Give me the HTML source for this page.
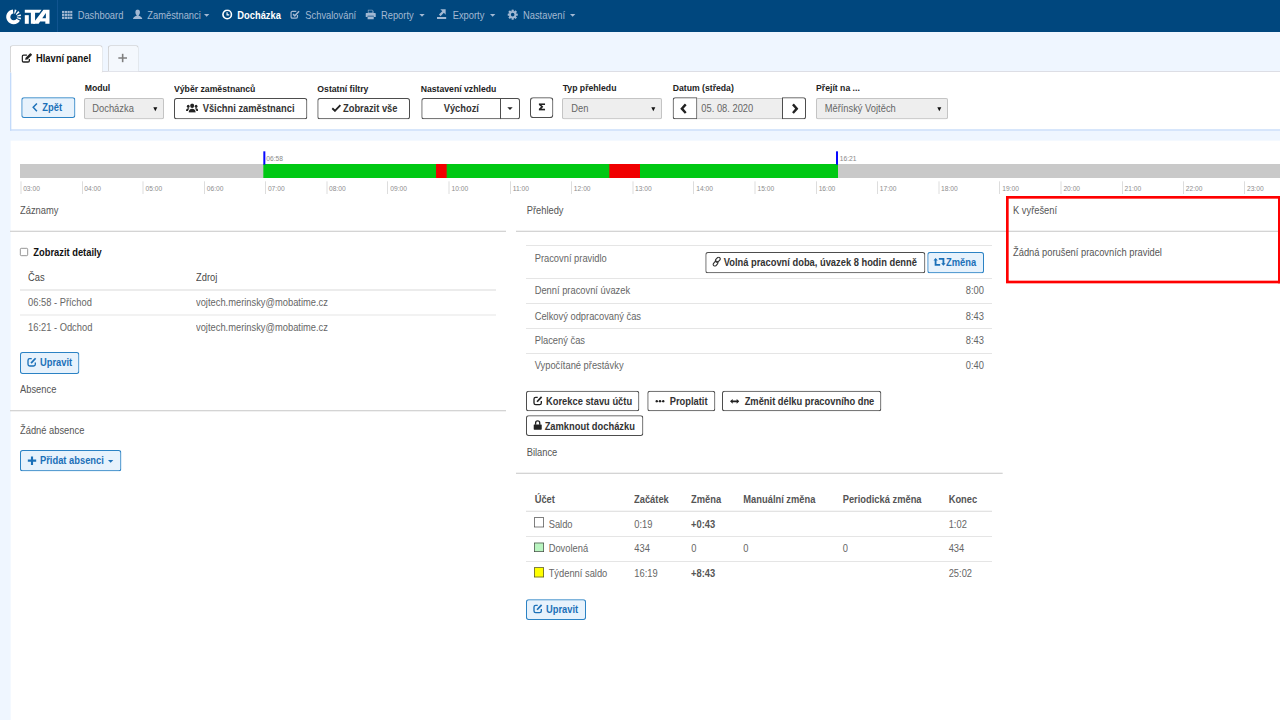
<!DOCTYPE html>
<html lang="cs">
<head>
<meta charset="utf-8">
<title>iTA - Docházka</title>
<style>
*{box-sizing:border-box;}
html,body{margin:0;padding:0;width:1280px;height:720px;overflow:hidden;background:#eff6ff;}
body{font-family:"Liberation Sans",sans-serif;font-size:14px;color:#555;}
#root{position:absolute;left:0;top:0;width:1920px;height:1080px;transform:scale(0.666667);transform-origin:0 0;overflow:hidden;background:#eff6ff;line-height:20px;}
.abs{position:absolute;}
svg{display:block;}
/* navbar */
#nav{position:absolute;left:0;top:0;width:1920px;height:48px;background:#00477e;}
#nav .it{position:absolute;top:2.75px;height:48px;line-height:43px;color:#a3b9d3;font-size:14px;white-space:nowrap;}
#nav .it.act{color:#fff;font-weight:bold;}
#nav .ic{position:absolute;}
.caret{position:absolute;width:0;height:0;border-left:4px solid transparent;border-right:4px solid transparent;border-top:4px solid #a3b9d3;}
/* tabs */
.tab{position:absolute;top:68px;height:40px;border:1px solid #c6c6c6;border-bottom:none;border-radius:4px 4px 0 0;background:#fff;}
#fpanel{position:absolute;left:15.4px;top:107px;width:1920px;height:89px;background:#fff;border:2px solid #c3dafa;border-top:1px solid #d0d0d8;}
.lbl{position:absolute;top:122px;font-weight:bold;font-size:13px;color:#222;white-space:nowrap;line-height:20px;}
.btn{position:absolute;height:30px;border:0;box-shadow:inset 0 0 0 1.5px #4d4d4d;border-radius:4px;background:#fff;color:#333;font-weight:bold;font-size:14px;line-height:28px;white-space:nowrap;}
.btn.blue{background:#e7f2fc;box-shadow:inset 0 0 0 1.5px #2b82c4;color:#1b70b8;}
.sel{position:absolute;height:32px;border:0;box-shadow:inset 0 0 0 1.5px #c4c4c4;border-radius:3px;background:#eee;color:#666;font-size:14px;line-height:28px;white-space:nowrap;}
.sel i{position:absolute;right:10px;top:13px;width:0;height:0;border-left:3.5px solid transparent;border-right:3.5px solid transparent;border-top:6px solid #111;}
/* main */
#main{position:absolute;left:15.5px;top:211.2px;width:1920px;height:880px;background:#fff;}
.tick{position:absolute;top:272px;width:1px;height:19px;background:#ccc;}
.tl{position:absolute;top:278px;font-size:10px;line-height:10px;color:#8e8e8e;}
.h{position:absolute;font-size:14px;color:#555;white-space:nowrap;line-height:20px;}
.hr{position:absolute;height:2px;background:#d4d4d4;}
.ln{position:absolute;height:1.2px;background:#d8d8d8;}
.t{position:absolute;font-size:14px;color:#666;white-space:nowrap;line-height:20px;}
.btn>*,.sel>*{margin-left:1px;margin-top:1px;}
.b{font-weight:bold;}
.r{text-align:right;}
.it,.t,.h,.lbl,.tl,.btn span.abs,.sel span.abs,.sx{transform:scaleY(1.12);transform-origin:50% 50%;}
</style>
</head>
<body>
<div id="root">
<!--NAV-S-->
<div id="nav">
 <svg class="abs" style="left:0;top:0" width="90" height="48" viewBox="0 0 90 48">
  <g fill="none" stroke="#fff">
   <path d="M19.66 17.29 A8.05 8.05 0 1 0 27.33 29.57" stroke-width="6.1"/>
   <path d="M21.69 17.34 A8.05 8.05 0 0 1 23.71 17.92" stroke-width="6.1"/><path d="M25.51 19.00 A8.05 8.05 0 0 1 26.97 20.51" stroke-width="6.1"/><path d="M27.99 22.35 A8.05 8.05 0 0 1 28.50 24.39" stroke-width="6.1"/><path d="M28.50 26.21 A8.05 8.05 0 0 1 27.99 28.25" stroke-width="6.1"/>
  </g>
  <g fill="#fff">
   <rect x="37.2" y="22.75" width="6" height="12.95"/>
   <path d="M37.2 14.8H62.2L59.1 19.2H52.6V35.7H46.3V19.2H37.2Z"/>
   <path d="M65.1 14.8H74.25V35.7H68V32.3H60.1L58 35.7H49.07Z M68.8 19.6V27.3H63.4Z" fill-rule="evenodd"/>
  </g>
 </svg>
 <div class="abs" style="left:86px;top:0;width:1px;height:48px;background:#1a5c99"></div>
 <!-- grid -->
 <svg class="ic" style="left:93px;top:16px" width="16" height="13" viewBox="0 0 16 13" fill="#a3b9d3">
  <rect x="0" y="0" width="3.4" height="3.4"/><rect x="4.1" y="0" width="3.4" height="3.4"/><rect x="8.2" y="0" width="3.4" height="3.4"/><rect x="12.3" y="0" width="3.4" height="3.4"/>
  <rect x="0" y="4.5" width="3.4" height="3.4"/><rect x="4.1" y="4.5" width="3.4" height="3.4"/><rect x="8.2" y="4.5" width="3.4" height="3.4"/><rect x="12.3" y="4.5" width="3.4" height="3.4"/>
  <rect x="0" y="9" width="3.4" height="3.4"/><rect x="4.1" y="9" width="3.4" height="3.4"/><rect x="8.2" y="9" width="3.4" height="3.4"/><rect x="12.3" y="9" width="3.4" height="3.4"/>
 </svg>
 <div class="it" style="left:116.5px">Dashboard</div>
 <!-- user -->
 <svg class="ic" style="left:199px;top:14px" width="15" height="15" viewBox="0 0 15 15" fill="#a3b9d3">
  <path d="M7.5 0.3C9.6 0.3 10.9 1.9 10.9 4.3C10.9 6.3 10 8 9 8.7V9.6C10.5 10.2 14.3 11.2 14.6 14.6H0.4C0.7 11.2 4.5 10.2 6 9.6V8.7C5 8 4.1 6.3 4.1 4.3C4.1 1.9 5.4 0.3 7.5 0.3Z"/>
 </svg>
 <div class="it" style="left:221px">Zaměstnanci</div>
 <div class="caret" style="left:306px;top:21px"></div>
 <!-- clock -->
 <svg class="ic" style="left:333px;top:14px" width="16" height="16" viewBox="0 0 16 16">
  <circle cx="7.8" cy="7.8" r="6.4" fill="none" stroke="#fff" stroke-width="2.4"/>
  <path d="M7.6 4.2V8.4H10.8" fill="none" stroke="#fff" stroke-width="1.7"/>
 </svg>
 <div class="it act" style="left:356px">Docházka</div>
 <!-- check square -->
 <svg class="ic" style="left:435px;top:14px" width="16" height="16" viewBox="0 0 16 16" fill="none" stroke="#a3b9d3">
  <path d="M11.2 8.6V11.2Q11.2 13.2 9.2 13.2H3.6Q1.6 13.2 1.6 11.2V5.2Q1.6 3.2 3.6 3.2H9.4" stroke-width="1.8"/>
  <path d="M4.6 7.2L7.2 9.8L13.6 2.8" stroke-width="2.2"/>
 </svg>
 <div class="it" style="left:458px">Schvalování</div>
 <!-- print -->
 <svg class="ic" style="left:548px;top:14px" width="16" height="16" viewBox="0 0 16 16" fill="#a3b9d3">
  <path d="M3.8 0.6H10.4L12.2 2.4V6H3.8Z"/>
  <path d="M1.4 5.4H14.6Q15.6 5.4 15.6 6.4V11.6H12.6V9.6H3.4V11.6H0.4V6.4Q0.4 5.4 1.4 5.4Z"/>
  <path d="M3.4 10.6H12.6V14.8H3.4Z"/>
  <rect x="4.6" y="1.6" width="6.2" height="3.4" fill="#00477e"/>
 </svg>
 <div class="it" style="left:571.5px">Reporty</div>
 <div class="caret" style="left:629px;top:21px"></div>
 <!-- export -->
 <svg class="ic" style="left:655px;top:13px" width="16" height="17" viewBox="0 0 16 17" fill="#a3b9d3">
  <path d="M5.5 1H13.5V9L10.8 6.3L5.8 11.3L3.4 8.9L8.4 3.9Z"/>
  <rect x="0.5" y="12.5" width="13.75" height="3"/>
 </svg>
 <div class="it" style="left:679px">Exporty</div>
 <div class="caret" style="left:735px;top:21px"></div>
 <!-- cog -->
 <svg class="ic" style="left:761px;top:14px" width="16" height="16" viewBox="-8 -8 16 16" fill="#a3b9d3">
  <rect x="-1.7" y="-7.6" width="3.4" height="15.2" rx="0.6"/><rect x="-1.7" y="-7.6" width="3.4" height="15.2" rx="0.6" transform="rotate(45)"/><rect x="-1.7" y="-7.6" width="3.4" height="15.2" rx="0.6" transform="rotate(90)"/><rect x="-1.7" y="-7.6" width="3.4" height="15.2" rx="0.6" transform="rotate(135)"/>
  <circle r="5.3"/><circle r="2.7" fill="#00477e"/>
 </svg>
 <div class="it" style="left:784.5px">Nastavení</div>
 <div class="caret" style="left:855px;top:21px"></div>
</div>
<!--NAV-E-->
<!--TABS-S-->
<div id="fpanel"></div>
<div class="tab" style="left:15px;width:138.5px;height:41px;"></div>
<div class="tab" style="left:162px;width:45.5px;background:#f4f8fd;height:39px;"></div>
<!-- edit icon -->
<svg class="abs" style="left:32px;top:79px" width="18" height="16" viewBox="0 0 18 16" fill="none" stroke="#222">
 <path d="M12 9.4V12Q12 14 10 14H3.4Q1.4 14 1.4 12V5.8Q1.4 3.8 3.4 3.8H8.4" stroke-width="2"/>
 <path d="M5.6 10.8L6.4 7.6L12.8 1.2Q13.6 0.4 14.4 1.2L15.6 2.4Q16.4 3.2 15.6 4L9.2 10.4Z" fill="#222" stroke="none"/>
</svg>
<div class="abs sx" style="left:54px;top:77px;font-size:14px;font-weight:bold;color:#111;line-height:20px;">Hlavní panel</div>
<svg class="abs" style="left:177px;top:80px" width="14" height="14" viewBox="0 0 14 14"><path d="M7 0.5V13.5M0.5 7H13.5" stroke="#7f7f7f" stroke-width="2.4"/></svg>

<!-- filter row -->
<div class="btn blue" style="left:31.5px;top:145.5px;width:81px;height:31.5px;"><svg class="abs" style="left:15px;top:7px" width="9" height="14" viewBox="0 0 9 14"><path d="M7.4 1.2L1.8 7L7.4 12.8" fill="none" stroke="#1b70b8" stroke-width="2.2"/></svg><span class="abs" style="left:31px;top:0.5px;line-height:28px">Zpět</span></div>
<div class="lbl" style="left:127px">Modul</div>
<div class="sel" style="left:126px;top:146.5px;width:120px;height:32.5px;"><span class="abs" style="left:11.5px;top:1px">Docházka</span><i></i></div>
<div class="lbl" style="left:261px;top:123px">Výběr zaměstnanců</div>
<div class="btn" style="left:261px;top:147px;width:199.5px;height:31.5px;"><svg class="abs" style="left:16.5px;top:6.5px" width="18.5" height="14" viewBox="0 0 20 13" preserveAspectRatio="none" fill="#222"><circle cx="10" cy="3.4" r="3.2"/><path d="M4.4 12.8C4.4 9 6.6 7.4 10 7.4C13.4 7.4 15.6 9 15.6 12.8Z"/><circle cx="3.6" cy="4.2" r="2.2"/><circle cx="16.4" cy="4.2" r="2.2"/><path d="M0 10.6C0 8.2 1.4 7 3.6 7C4.4 7 5 7.2 5.4 7.4C4 8.4 3.4 9.4 3.2 10.6Z"/><path d="M20 10.6C20 8.2 18.6 7 16.4 7C15.6 7 15 7.2 14.6 7.4C16 8.4 16.6 9.4 16.8 10.6Z"/></svg><span class="abs" style="left:42px;top:0">Všichni zaměstnanci</span></div>
<div class="lbl" style="left:476px;top:123px">Ostatní filtry</div>
<div class="btn" style="left:475.5px;top:147px;width:139.5px;height:31.5px;"><svg class="abs" style="left:20px;top:8px" width="15" height="12" viewBox="0 0 15 12"><path d="M1.4 6.4L5.4 10.2L13.6 1.6" fill="none" stroke="#222" stroke-width="2.8"/></svg><span class="abs" style="left:38px;top:0">Zobrazit vše</span></div>
<div class="lbl" style="left:631px;top:123px">Nastavení vzhledu</div>
<div class="btn" style="left:631.5px;top:147px;width:120px;border-radius:4px 0 0 4px;height:31.5px;"><span class="abs" style="left:33px;top:0">Výchozí</span></div>
<div class="btn" style="left:750px;top:147px;width:30px;border-radius:0 4px 4px 0;height:31.5px;"><span class="caret" style="left:10px;top:13px;border-top-color:#222"></span></div>
<div class="btn" style="left:795px;top:145.5px;width:34.5px;height:31.5px;border-radius:5px;"><svg class="abs" style="left:12px;top:8.5px" width="9.6" height="10.6" viewBox="0 0 9.6 10.6"><path d="M0 0H9.6V2.6H4.2L7 5.3L4.2 8H9.6V10.6H0V8.6L3.6 5.3L0 2Z" fill="#222"/></svg></div>
<div class="lbl" style="left:844px">Typ přehledu</div>
<div class="sel" style="left:842.5px;top:146.5px;width:150.5px;height:32.5px;"><span class="abs" style="left:13.5px;top:1px">Den</span><i></i></div>
<div class="lbl" style="left:1009px">Datum (středa)</div>
<div class="sel" style="left:1044px;top:146.5px;width:130.5px;border-radius:0;height:32.5px;"><span class="abs" style="left:7px;top:1px">05. 08. 2020</span></div>
<div class="btn" style="left:1008.5px;top:146px;width:37px;height:33px;border-radius:4px 0 0 4px;"><svg class="abs" style="left:10.5px;top:8px" width="11" height="16" viewBox="0 0 11 16"><path d="M8.6 1.6L2.8 8L8.6 14.4" fill="none" stroke="#222" stroke-width="3.6"/></svg></div>
<div class="btn" style="left:1173px;top:146px;width:36px;height:33px;border-radius:0 4px 4px 0;"><svg class="abs" style="left:12.5px;top:8px" width="11" height="16" viewBox="0 0 11 16"><path d="M2.4 1.6L8.2 8L2.4 14.4" fill="none" stroke="#222" stroke-width="3.6"/></svg></div>
<div class="lbl" style="left:1224px">Přejít na ...</div>
<div class="sel" style="left:1224px;top:146.5px;width:198px;height:32.5px;"><span class="abs" style="left:12px;top:1px">Měřínský Vojtěch</span><i></i></div>
<!--TABS-E-->
<!--MAIN-S-->
<div id="main"></div>
<div class="abs" style="left:30px;top:246px;width:1900px;height:20.8px;background:#c9c9c9"></div>
<div class="abs" style="left:394.83px;top:246px;width:862.1px;height:20.8px;background:#00c814"></div>
<div class="abs" style="left:653.60px;top:246px;width:16.15px;height:20.8px;background:#f00000"></div>
<div class="abs" style="left:914.25px;top:246px;width:45.75px;height:20.8px;background:#f00000"></div>
<div class="abs" style="left:394.73px;top:227px;width:3px;height:19.5px;background:#0808ff"></div>
<div class="tl" style="left:399.33px;top:233px;color:#888">06:58</div>
<div class="abs" style="left:1253.9px;top:227px;width:3px;height:19.5px;background:#0808ff"></div>
<div class="tl" style="left:1259.6px;top:233px;color:#888">16:21</div>
<div class="tick" style="left:30.75px"></div>
<div class="tl" style="left:34.75px">03:00</div>
<div class="tick" style="left:122.53px"></div>
<div class="tl" style="left:126.53px">04:00</div>
<div class="tick" style="left:214.32px"></div>
<div class="tl" style="left:218.32px">05:00</div>
<div class="tick" style="left:306.11px"></div>
<div class="tl" style="left:310.11px">06:00</div>
<div class="tick" style="left:397.89px"></div>
<div class="tl" style="left:401.89px">07:00</div>
<div class="tick" style="left:489.67px"></div>
<div class="tl" style="left:493.67px">08:00</div>
<div class="tick" style="left:581.46px"></div>
<div class="tl" style="left:585.46px">09:00</div>
<div class="tick" style="left:673.25px"></div>
<div class="tl" style="left:677.25px">10:00</div>
<div class="tick" style="left:765.03px"></div>
<div class="tl" style="left:769.03px">11:00</div>
<div class="tick" style="left:856.81px"></div>
<div class="tl" style="left:860.81px">12:00</div>
<div class="tick" style="left:948.60px"></div>
<div class="tl" style="left:952.60px">13:00</div>
<div class="tick" style="left:1040.38px"></div>
<div class="tl" style="left:1044.38px">14:00</div>
<div class="tick" style="left:1132.17px"></div>
<div class="tl" style="left:1136.17px">15:00</div>
<div class="tick" style="left:1223.95px"></div>
<div class="tl" style="left:1227.95px">16:00</div>
<div class="tick" style="left:1315.74px"></div>
<div class="tl" style="left:1319.74px">17:00</div>
<div class="tick" style="left:1407.52px"></div>
<div class="tl" style="left:1411.52px">18:00</div>
<div class="tick" style="left:1499.31px"></div>
<div class="tl" style="left:1503.31px">19:00</div>
<div class="tick" style="left:1591.10px"></div>
<div class="tl" style="left:1595.10px">20:00</div>
<div class="tick" style="left:1682.88px"></div>
<div class="tl" style="left:1686.88px">21:00</div>
<div class="tick" style="left:1774.66px"></div>
<div class="tl" style="left:1778.66px">22:00</div>
<div class="tick" style="left:1866.45px"></div>
<div class="tl" style="left:1870.45px">23:00</div>
<!-- left column -->
<div class="h" style="left:30px;top:306px">Záznamy</div>
<div class="hr" style="left:15px;top:346px;width:744px"></div>
<div class="abs" style="left:29.5px;top:371.5px;width:12.5px;height:12.5px;border:1.3px solid #606060;border-radius:2px;background:#fff"></div>
<div class="t b" style="left:50px;top:367.5px;color:#111">Zobrazit detaily</div>
<div class="t" style="left:42px;top:406px;color:#484848">Čas</div>
<div class="t" style="left:294px;top:406px;color:#484848">Zdroj</div>
<div class="hr" style="left:30px;top:434px;width:714px;background:#e3e3e3"></div>
<div class="t" style="left:42px;top:444px">06:58 - Příchod</div>
<div class="t" style="left:294px;top:444px">vojtech.merinsky@mobatime.cz</div>
<div class="ln" style="left:30px;top:471.5px;width:714px"></div>
<div class="t" style="left:42px;top:481px">16:21 - Odchod</div>
<div class="t" style="left:294px;top:481px">vojtech.merinsky@mobatime.cz</div>
<div class="btn blue" style="left:30px;top:528px;width:88.5px;height:32.5px;"><svg class="abs" style="left:8.5px;top:5.5px" width="16" height="16" viewBox="0 0 16 16" fill="none" stroke="#1b70b8"><path d="M13 8.6V11.4Q13 14 10.4 14H4.6Q2 14 2 11.4V5.6Q2 3 4.6 3H7.6" stroke-width="2"/><path d="M6.6 9.6L13.4 2.4" stroke-width="2.6"/></svg><span class="abs" style="left:29px;top:0.5px">Upravit</span></div>
<div class="h" style="left:30px;top:574px">Absence</div>
<div class="hr" style="left:15px;top:615px;width:744px"></div>
<div class="h" style="left:30px;top:635px">Žádné absence</div>
<div class="btn blue" style="left:30px;top:675px;width:151.5px;height:31.5px;"><svg class="abs" style="left:10px;top:8px" width="14" height="14" viewBox="0 0 14 14"><path d="M7 0.6V13.4M0.6 7H13.4" stroke="#1b70b8" stroke-width="3.2"/></svg><span class="abs" style="left:29px;top:1px">Přidat absenci</span><span class="caret" style="left:131px;top:14px;border-top-color:#1b70b8"></span></div>
<!-- middle column -->
<div class="h" style="left:790px;top:306px">Přehledy</div>
<div class="hr" style="left:774px;top:346px;width:1150px"></div>
<div class="ln" style="left:789px;top:368px;width:699px"></div>
<div class="t" style="left:802px;top:377px">Pracovní pravidlo</div>
<div class="btn" style="left:1057.5px;top:378px;width:330px;height:31.5px;"><svg class="abs" style="left:9.5px;top:6px" width="14" height="15" viewBox="0 0 14 15" fill="none" stroke="#333" stroke-width="1.7"><g transform="rotate(-48 7 7.5)"><rect x="-0.4" y="5.7" width="8.2" height="5" rx="2.5"/><rect x="6.2" y="4.3" width="8.2" height="5" rx="2.5"/></g></svg><span class="abs" style="left:27px;top:0.5px">Volná pracovní doba, úvazek 8 hodin denně</span></div>
<div class="btn blue" style="left:1390.5px;top:378px;width:85.5px;height:31.5px;"><svg class="abs" style="left:8.75px;top:8.25px" width="18.5" height="11.5" viewBox="0 0 18.5 11.5" fill="#1b70b8"><path d="M0 3.75L3.4 0L6.75 3.75H4.75V9H10.25V11.5H2V3.75Z"/><path d="M18.5 7.75L15.1 11.5L11.75 7.75H13.75V2.5H8.25V0H16.5V7.75Z"/></svg><span class="abs" style="left:27.5px;top:0.5px">Změna</span></div>
<div class="ln" style="left:789px;top:417px;width:699px"></div>
<div class="t" style="left:802px;top:426px">Denní pracovní úvazek</div><div class="t r" style="left:1376px;width:100px;top:426px">8:00</div>
<div class="ln" style="left:789px;top:454.5px;width:699px"></div>
<div class="t" style="left:802px;top:463.5px">Celkový odpracovaný čas</div><div class="t r" style="left:1376px;width:100px;top:463.5px">8:43</div>
<div class="ln" style="left:789px;top:492px;width:699px"></div>
<div class="t" style="left:802px;top:501px">Placený čas</div><div class="t r" style="left:1376px;width:100px;top:501px">8:43</div>
<div class="ln" style="left:789px;top:529.5px;width:699px"></div>
<div class="t" style="left:802px;top:538px">Vypočítané přestávky</div><div class="t r" style="left:1376px;width:100px;top:538px">0:40</div>

<div class="btn" style="left:789px;top:586px;width:169.5px;height:31px;"><svg class="abs" style="left:8.5px;top:5.5px" width="16" height="16" viewBox="0 0 16 16" fill="none" stroke="#222"><path d="M13 8.6V11.4Q13 14 10.4 14H4.6Q2 14 2 11.4V5.6Q2 3 4.6 3H7.6" stroke-width="2"/><path d="M6.6 9.6L13.4 2.4" stroke-width="2.6"/></svg><span class="abs" style="left:29px;top:0.5px">Korekce stavu účtu</span></div>
<div class="btn" style="left:970.5px;top:586px;width:102px;height:31px;"><svg class="abs" style="left:11px;top:13px" width="14" height="4" viewBox="0 0 14 4" fill="#222"><circle cx="2" cy="2" r="1.9"/><circle cx="7" cy="2" r="1.9"/><circle cx="12" cy="2" r="1.9"/></svg><span class="abs" style="left:33px;top:0.5px">Proplatit</span></div>
<div class="btn" style="left:1083px;top:586px;width:238.5px;height:31px;"><svg class="abs" style="left:11px;top:10px" width="14" height="10" viewBox="0 0 14 10" fill="#222"><path d="M0 5L4 1.4V3.8H10V1.4L14 5L10 8.6V6.2H4V8.6Z"/></svg><span class="abs" style="left:33px;top:0.5px">Změnit délku pracovního dne</span></div>
<div class="btn" style="left:789px;top:623px;width:175.5px;height:30.5px;"><svg class="abs" style="left:9.5px;top:5.5px" width="13" height="15" viewBox="0 0 13 15"><path d="M3.4 7V4.6Q3.4 1.4 6.5 1.4T9.6 4.6V7" fill="none" stroke="#222" stroke-width="2"/><rect x="0.4" y="6.6" width="12.2" height="8" rx="1" fill="#222"/></svg><span class="abs" style="left:27px;top:0.5px">Zamknout docházku</span></div>
<div class="h" style="left:790px;top:669px">Bilance</div>
<div class="hr" style="left:774px;top:708.5px;width:730px"></div>

<div class="t b" style="left:802px;top:738.8px;color:#555">Účet</div>
<div class="t b" style="left:951px;top:738.8px;color:#555">Začátek</div>
<div class="t b" style="left:1036.5px;top:738.8px;color:#555">Změna</div>
<div class="t b" style="left:1115px;top:738.8px;color:#555">Manuální změna</div>
<div class="t b" style="left:1264px;top:738.8px;color:#555">Periodická změna</div>
<div class="t b" style="left:1423px;top:738.8px;color:#555">Konec</div>
<div class="hr" style="left:789px;top:766px;width:699px;background:#e3e3e3"></div>
<div class="abs" style="left:801px;top:776px;width:15px;height:14.5px;border:1.5px solid #404040;background:#fff"></div>
<div class="t" style="left:823px;top:775.5px">Saldo</div><div class="t" style="left:951.5px;top:775.5px">0:19</div><div class="t b" style="left:1036.5px;top:775.5px;color:#555">+0:43</div><div class="t" style="left:1423px;top:775.5px">1:02</div>
<div class="ln" style="left:789px;top:804px;width:699px"></div>
<div class="abs" style="left:801px;top:813.5px;width:15px;height:14.5px;border:1.5px solid #404040;background:#b9f5c0"></div>
<div class="t" style="left:823px;top:813px">Dovolená</div><div class="t" style="left:951.5px;top:813px">434</div><div class="t" style="left:1037px;top:813px">0</div><div class="t" style="left:1115px;top:813px">0</div><div class="t" style="left:1264px;top:813px">0</div><div class="t" style="left:1423px;top:813px">434</div>
<div class="ln" style="left:789px;top:841.5px;width:699px"></div>
<div class="abs" style="left:801px;top:851px;width:15px;height:14.5px;border:1.5px solid #404040;background:#ffff00"></div>
<div class="t" style="left:823px;top:850px">Týdenní saldo</div><div class="t" style="left:951.5px;top:850px">16:19</div><div class="t b" style="left:1036.5px;top:850px;color:#555">+8:43</div><div class="t" style="left:1423px;top:850px">25:02</div>
<div class="btn blue" style="left:789px;top:898.5px;width:90px;height:31.5px;"><svg class="abs" style="left:8.5px;top:5.5px" width="16" height="16" viewBox="0 0 16 16" fill="none" stroke="#1b70b8"><path d="M13 8.6V11.4Q13 14 10.4 14H4.6Q2 14 2 11.4V5.6Q2 3 4.6 3H7.6" stroke-width="2"/><path d="M6.6 9.6L13.4 2.4" stroke-width="2.6"/></svg><span class="abs" style="left:29px;top:0.5px">Upravit</span></div>

<!-- right column -->
<div class="abs" style="left:1508.5px;top:294px;width:420px;height:130.5px;border:4px solid #ff0000;"></div>
<div class="abs" style="left:1917px;top:294px;width:3px;height:130.5px;background:#ff0000;"></div>
<div class="h" style="left:1519.5px;top:306px">K vyřešení</div>

<div class="h" style="left:1519.5px;top:367.5px">Žádná porušení pracovních pravidel</div>
<!--MAIN-E-->
</div>
</body>
</html>
